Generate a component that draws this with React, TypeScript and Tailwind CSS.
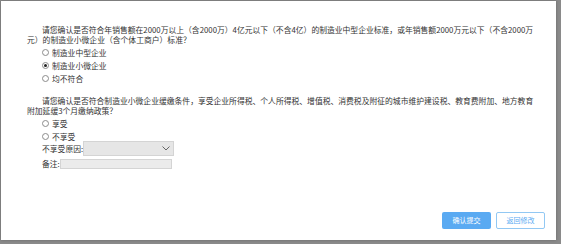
import React, { useState } from 'react'

const FONT = '"Noto Sans CJK SC", "Noto Sans", sans-serif'

const Radio = ({ checked, label, onClick }: { checked: boolean; label: string; onClick: () => void }) => (
  <div className="flex h-[13px] items-center pl-[15px] cursor-pointer" onClick={onClick}>
    <span className="flex h-[7px] w-[7px] items-center justify-center rounded-full border border-[#8c8c8c] bg-white">
      {checked && <span className="h-[3px] w-[3px] rounded-full bg-[#222]" />}
    </span>
    <span className="ml-[3px]">{label}</span>
  </div>
)

export default function App() {
  const [scale, setScale] = useState('small')
  const [enjoy, setEnjoy] = useState<string | null>(null)

  return (
    <div className="h-[244px] w-[561px] overflow-hidden bg-[#8a8a8a] pl-px pt-px" style={{ fontFamily: FONT }}>
      <div className="flex h-[239px] w-[555px] flex-col bg-white pl-[26px] pt-[24px] text-[7.8px] text-[#333] shadow-[0_0_3px_rgba(0,0,0,0.25)]">
        <p className="w-[525px] indent-[15px] leading-[10px]">
          请您确认是否符合年销售额在2000万以上（含2000万）4亿元以下（不含4亿）的制造业中型企业标准，或年销售额2000万元以下（不含2000万
          <br />
          元）的制造业小微企业（含个体工商户）标准？
        </p>
        <div className="mt-px">
          <Radio checked={scale === 'mid'} label="制造业中型企业" onClick={() => setScale('mid')} />
          <Radio checked={scale === 'small'} label="制造业小微企业" onClick={() => setScale('small')} />
          <Radio checked={scale === 'none'} label="均不符合" onClick={() => setScale('none')} />
        </div>
        <p className="mt-[11px] w-[525px] indent-[15px] leading-[10px]">
          请您确认是否符合制造业小微企业缓缴条件，享受企业所得税、个人所得税、增值税、消费税及附征的城市维护建设税、教育费附加、地方教育
          <br />
          附加延缓3个月缴纳政策？
        </p>
        <div className="mt-px">
          <Radio checked={enjoy === 'yes'} label="享受" onClick={() => setEnjoy('yes')} />
          <Radio checked={enjoy === 'no'} label="不享受" onClick={() => setEnjoy('no')} />
        </div>
        <div className="-mt-[2px] flex h-[15px] items-center pl-[15px]">
          <span>不享受原因:</span>
          <div className="flex h-[15px] w-[91px] items-center justify-end border border-[#d4d4d4] bg-[#e6e6e6] pr-[3px]">
            <svg width="8" height="5" viewBox="0 0 8 5" fill="none">
              <path d="M0.5 0.5 L4 4 L7.5 0.5" stroke="#666" strokeWidth="1" />
            </svg>
          </div>
        </div>
        <div className="mt-[3px] flex h-[10px] items-center pl-[15px]">
          <span>备注:</span>
          <div className="h-[10px] w-[112px] border border-[#d4d4d4] bg-[#ebebeb]" />
        </div>
        <div className="flex-1" />
        <div className="flex justify-end gap-[5px] pb-[11px] pr-[11px]">
          <button className="flex h-[17px] w-[49px] items-center justify-center rounded-[2px] bg-[#5aaaf2] text-[7px] text-white">
            确认提交
          </button>
          <button className="flex h-[17px] w-[49px] items-center justify-center rounded-[2px] border border-[#92c8f3] bg-white text-[7px] text-[#5aaaf2]">
            返回修改
          </button>
        </div>
      </div>
    </div>
  )
}
